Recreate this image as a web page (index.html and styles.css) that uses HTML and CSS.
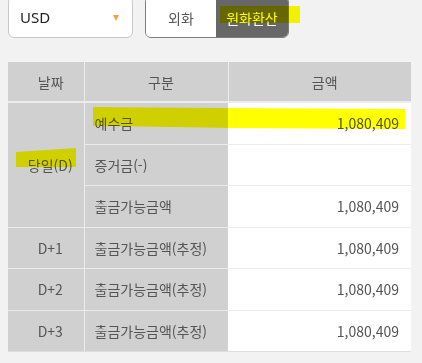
FILE: index.html
```html
<!DOCTYPE html>
<html lang="ko">
<head>
<meta charset="utf-8">
<link rel="stylesheet" href="styles.css">
</head>
<body>
<div class="page">
  <div class="topbar">
    <div class="select"><span class="select-value">USD</span><span class="caret"></span></div>
    <div class="toggle">
      <div class="opt">외화</div>
      <div class="opt active">원화환산</div>
    </div>
  </div>
  <table class="grid">
    <colgroup><col class="c1"><col class="c2"><col class="c3"></colgroup>
    <thead>
      <tr><th class="date">날짜</th><th class="kind">구분</th><th class="amt-h">금액</th></tr>
    </thead>
    <tbody>
      <tr><td class="date" rowspan="3">당일(D)</td><td class="kind">예수금</td><td class="amt">1,080,409</td></tr>
      <tr><td class="kind">증거금(-)</td><td class="amt"></td></tr>
      <tr><td class="kind">출금가능금액</td><td class="amt">1,080,409</td></tr>
      <tr><td class="date">D+1</td><td class="kind">출금가능금액(추정)</td><td class="amt">1,080,409</td></tr>
      <tr><td class="date">D+2</td><td class="kind">출금가능금액(추정)</td><td class="amt">1,080,409</td></tr>
      <tr><td class="date">D+3</td><td class="kind">출금가능금액(추정)</td><td class="amt">1,080,409</td></tr>
    </tbody>
  </table>
  <div class="marker m-toggle"></div>
  <div class="marker m-row"></div>
  <div class="marker m-date"></div>
</div>
</body>
</html>
```
FILE: styles.css
```css
html, body {
  margin: 0;
  padding: 0;
  background: #f2f2f2;
}
body {
  font-family: "Noto Sans CJK KR", "Noto Sans", sans-serif;
  color: #555;
  overflow: hidden;
}
.page {
  position: relative;
  padding: 0 11px 0 8px;
}
.topbar {
  display: flex;
  gap: 12px;
  margin-top: -4px;
  height: 42px;
}
.select {
  box-sizing: border-box;
  width: 125px;
  height: 42px;
  background: #fff;
  border: 1px solid #c9c9c9;
  border-radius: 6px;
  display: flex;
  align-items: center;
  justify-content: space-between;
  padding: 0 13px 0 11px;
}
.select-value {
  font-family: "Noto Sans", sans-serif;
  font-size: 15px;
  color: #222;
  line-height: 1;
}
.caret {
  width: 0;
  height: 0;
  border-left: 3.5px solid transparent;
  border-right: 3.5px solid transparent;
  border-top: 6px solid #f5a23a;
  margin-top: 2px;
}
.toggle {
  box-sizing: border-box;
  width: 144px;
  height: 42px;
  border: 1px solid #7d7d7d;
  border-radius: 6px;
  overflow: hidden;
  display: grid;
  grid-template-columns: 70px 1fr;
}
.opt {
  display: flex;
  align-items: center;
  justify-content: center;
  font-size: 14px;
  color: #555;
  background: #fff;
  padding-top: 2px;
}
.opt.active {
  background: #676767;
  color: #fff;
}
.grid {
  margin-top: 24px;
  width: 403px;
  border-collapse: collapse;
  table-layout: fixed;
  font-size: 14px;
}
.c1 { width: 76px; }
.c2 { width: 144px; }
.c3 { width: 183px; }
.grid th {
  background: #d0d0d0;
  font-weight: normal;
  height: 39px;
  padding: 0 0 0 10px;
  text-align: center;
  border-right: 1px solid #ececec;
  border-bottom: 2px solid #ececec;
}
.grid th:last-child { border-right: none; }
.grid td {
  height: 40.5px;
  padding: 0;
  border-bottom: 1px solid #ebebeb;
}
.grid tbody tr:last-child td { border-bottom: 1px solid #dedede; }
.grid td.date {
  background: #d0d0d0;
  text-align: center;
  padding-left: 9px;
  border-right: 1px solid #ececec;
}
.grid td.kind {
  background: #d0d0d0;
  padding-left: 10px;
  white-space: nowrap;
}
.grid td.amt {
  background: #fff;
  text-align: right;
  padding-right: 12px;
}
.marker {
  position: absolute;
  background: #ffff00;
  mix-blend-mode: multiply;
}
.m-toggle {
  left: 220px;
  top: 10px;
  width: 80px;
  height: 17px;
}
.m-row {
  left: 93px;
  top: 111px;
  width: 312px;
  height: 22px;
  clip-path: polygon(0 0, 40% 1px, 100% 2px, 100% 100%, 45% 95%, 0 85%);
}
.m-date {
  left: 16px;
  top: 152px;
  width: 60px;
  height: 19px;
  clip-path: polygon(0 4px, 100% 0, 100% 100%, 0 100%);
}
```
